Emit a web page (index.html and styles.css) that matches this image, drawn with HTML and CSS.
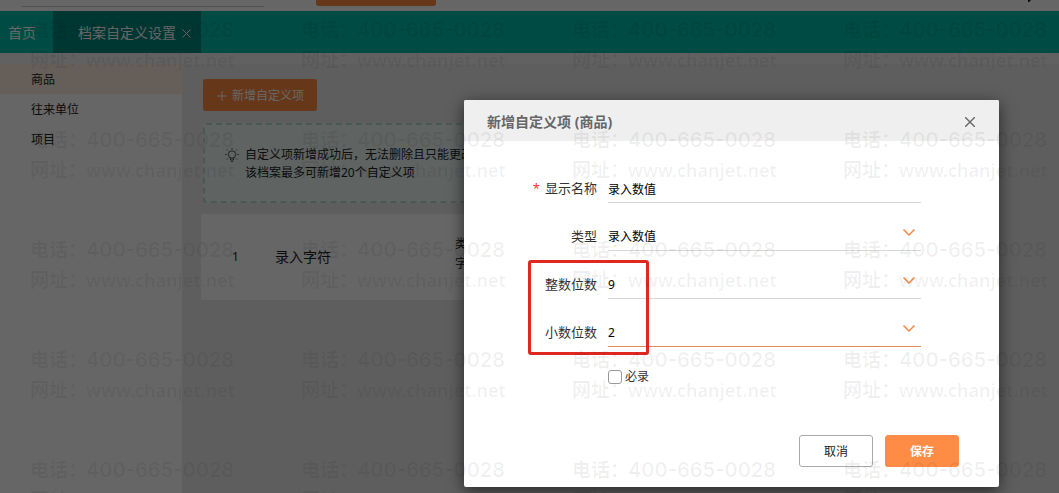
FILE: index.html
```html
<!DOCTYPE html>
<html lang="zh-CN">
<head>
<meta charset="utf-8">
<title>档案自定义设置</title>
<link rel="stylesheet" href="styles.css">
</head>
<body>
<div class="app">
  <header class="topbar">
    <div class="search-line"></div>
    <div class="search-button"></div>
    <svg class="top-mark" width="5" height="3" viewBox="0 0 5 3"><path d="M1 0h3L2 2H1z" fill="#000"/></svg>
  </header>
  <nav class="tabs">
    <a class="tab" href="#">首页</a>
    <a class="tab tab-active" href="#">档案自定义设置
      <svg width="9" height="9" viewBox="0 0 9 9" fill="none" stroke="currentColor"><path d="M.5.5l8 8M8.5.5l-8 8"/></svg>
    </a>
  </nav>
  <div class="workspace">
    <aside class="sidebar">
      <a class="side-item side-active" href="#">商品</a>
      <a class="side-item" href="#">往来单位</a>
      <a class="side-item" href="#">项目</a>
    </aside>
    <main class="main">
      <button class="add-button" type="button">
        <svg width="10" height="10" viewBox="0 0 10 10" stroke="currentColor"><path d="M5 0v10M0 5h10"/></svg>
        新增自定义项
      </button>
      <section class="tip">
        <svg class="bulb" width="14" height="14" viewBox="0 0 14 14" fill="none" stroke="currentColor"><circle cx="7" cy="6.500" r="3.700"/><path d="M5.500 10v2h3v-2M6 13.500h2M7 0v1.500M0 6.500h1.500M12.500 6.500H14M2 1.500l1 1M12 1.500l-1 1M2 11.500l1-1M12 11.500l-1-1"/></svg>
        <p class="tip-text">自定义项新增成功后，无法删除且只能更改<br>该档案最多可新增20个自定义项</p>
      </section>
      <section class="record">
        <span class="record-no">1</span>
        <span class="record-name">录入字符</span>
        <span class="record-type">类型<br>字符</span>
      </section>
    </main>
  </div>
</div>
<div class="backdrop">
  <form class="dialog" role="dialog" aria-labelledby="dialog-title">
    <div class="dialog-head">
      <h2 class="dialog-title" id="dialog-title">新增自定义项 (商品)</h2>
      <button class="close" type="button" aria-label="关闭">
        <svg width="10" height="10" viewBox="0 0 10 10" fill="none" stroke="currentColor" stroke-width="1.400"><path d="M0 0l10 10M10 0L0 10"/></svg>
      </button>
    </div>
    <div class="dialog-body">
      <div class="field">
        <label class="label" for="name"><span class="required">*</span>显示名称</label>
        <div class="control"><input class="value" id="name" type="text" value="录入数值"></div>
      </div>
      <div class="field">
        <label class="label" for="type">类型</label>
        <div class="control">
          <select class="value" id="type"><option>录入数值</option></select>
          <svg class="chevron" width="12" height="7" viewBox="0 0 12 7"><path d="M.5.500L6 6l5.500-5.500"/></svg>
        </div>
      </div>
      <div class="digits">
        <div class="field">
          <label class="label" for="integer">整数位数</label>
          <div class="control">
            <select class="value" id="integer"><option>9</option></select>
            <svg class="chevron" width="12" height="7" viewBox="0 0 12 7"><path d="M.5.500L6 6l5.500-5.500"/></svg>
          </div>
        </div>
        <div class="field">
          <label class="label" for="decimal">小数位数</label>
          <div class="control control-active">
            <select class="value" id="decimal"><option>2</option></select>
            <svg class="chevron" width="12" height="7" viewBox="0 0 12 7"><path d="M.5.500L6 6l5.500-5.500"/></svg>
          </div>
        </div>
        <div class="highlight"></div>
      </div>
      <label class="check"><input class="check-box" type="checkbox">必录</label>
    </div>
    <div class="dialog-foot">
      <button class="button" type="button">取消</button>
      <button class="button button-primary" type="submit">保存</button>
    </div>
  </form>
</div>
<div class="watermarks" aria-hidden="true"></div>
<script src="watermark.js"></script>
</body>
</html>
```

FILE: watermark.js
```js
const layer = document.querySelector('.watermarks');
const count = Math.ceil(innerWidth / 271) * Math.ceil(innerHeight / 110);
for (let i = 0; i < count; i++) {
  const mark = document.createElement('div');
  mark.className = 'watermark';
  mark.innerHTML = '<span>电话：</span><span class="phone">400-665-0028</span><span>网址：</span><span class="site">www.chanjet.net</span>';
  layer.append(mark);
}
```

FILE: styles.css
```css
* { box-sizing: border-box; }

body {
  margin: 0;
  min-height: 100vh;
  overflow: hidden;
  position: relative;
  font: 12px/18px "Noto Sans", "Noto Sans CJK SC", sans-serif;
  color: #222;
}

a { color: inherit; text-decoration: none; }

button, input, select { font: inherit; color: inherit; }

.app {
  display: flex;
  flex-direction: column;
  min-height: 100vh;
  background: #ebebeb;
}

.topbar {
  display: flex;
  height: 11px;
  padding: 0 27px 0 22px;
  background: #fff;
}

.search-line { width: 242px; height: 7px; border-bottom: 1px solid #ccc; }

.search-button {
  width: 120px;
  height: 6px;
  margin-left: 52px;
  border-radius: 0 0 3px 3px;
  background: #ff8c40;
}

.top-mark { margin-left: auto; }

.tabs {
  display: flex;
  height: 42px;
  background: #00bba9;
  color: #fff;
  font-size: 14px;
}

.tab { display: flex; align-items: center; width: 53px; padding: 2px 0 0 8px; }

.tab-active { gap: 6px; width: 148px; padding-left: 25px; background: #008a80; }

.workspace { display: flex; flex: 1; border-top: 11px solid #f2f2f2; }

.sidebar { width: 182px; background: #fff; }

.side-item { display: block; padding: 7px 31px 5px; }

.side-active { background: #ffebdf; }

.main { flex: 1; padding: 15px 80px 0 19px; }

.add-button {
  display: flex;
  align-items: center;
  gap: 5px;
  height: 32px;
  margin-left: 2px;
  padding: 2px 13px 0 14px;
  border: 0;
  border-radius: 3px;
  background: #ff8c40;
  color: #fff;
}

.tip {
  display: flex;
  gap: 6px;
  height: 80px;
  margin: 12px 0 11px 2px;
  padding: 21px 20px 0;
  border: 2px dashed #b5dcd4;
  border-radius: 3px;
  background: #edf8f5;
}

.bulb { margin-top: 2px; color: #555; }

.tip-text { margin: 0; }

.record {
  display: flex;
  align-items: center;
  height: 86px;
  padding-left: 31px;
  background: #fff;
}

.record-no { width: 43px; }

.record-name { width: 180px; font-size: 14px; }

.record-type { line-height: 20px; padding-bottom: 6px; }

.backdrop {
  position: absolute;
  inset: 0;
  display: flex;
  justify-content: flex-end;
  align-items: flex-start;
  padding: 100px 60px 0;
  background: rgba(0, 0, 0, 0.6);
}

.dialog {
  width: 535px;
  border-radius: 2px;
  background: #fff;
  box-shadow: 0 4px 16px rgba(0, 0, 0, 0.6);
}

.dialog-head {
  display: flex;
  align-items: center;
  justify-content: space-between;
  height: 41px;
  padding: 2px 24px 0 23px;
  border-radius: 2px 2px 0 0;
  background: #efefef;
  color: #666;
}

.dialog-title { margin: 0; font-size: 14px; font-weight: 700; }

.close { display: flex; padding: 0; border: 0; background: none; }

.dialog-body { padding: 14px 78px 0 0; }

.field {
  display: grid;
  grid-template-columns: 133px 1fr;
  gap: 11px;
  align-items: end;
  height: 48px;
}

.label {
  height: 28px;
  color: #333;
  font-size: 13px;
  line-height: 27px;
  text-align: right;
}

.required { margin-right: 5px; color: #f33; }

.control { position: relative; height: 28px; border-bottom: 1px solid #d8d8d8; }

.control-active { border-color: #e08a58; }

.value {
  display: block;
  appearance: none;
  width: 100%;
  height: 27px;
  padding: 0;
  border: 0;
  outline: 0;
  background: none;
  color: #000;
}

.chevron {
  position: absolute;
  top: 6px;
  right: 6px;
  fill: none;
  stroke: #f58a45;
  stroke-width: 1.5;
  pointer-events: none;
}

.digits { position: relative; }

.highlight {
  position: absolute;
  inset: 9px auto -8px 64px;
  width: 121px;
  border: 3px solid #e02820;
  border-radius: 3px;
  pointer-events: none;
}

.check {
  display: flex;
  align-items: center;
  gap: 3px;
  margin: 21px 0 0 144px;
  color: #333;
}

.check-box {
  appearance: none;
  width: 14px;
  height: 14px;
  margin: 0;
  border: 1px solid #999;
  border-radius: 3px;
}

.dialog-foot {
  display: flex;
  justify-content: flex-end;
  gap: 12px;
  padding: 49px 40px 20px;
}

.button {
  width: 74px;
  height: 32px;
  padding: 2px 0 0;
  border: 1px solid #aaa;
  border-radius: 3px;
  background: #fff;
  color: #222;
}

.button-primary { border-color: #ff8c45; background: #ff8c45; color: #fff; font-weight: 700; }

.watermarks {
  position: absolute;
  inset: 0;
  display: grid;
  grid-template-columns: repeat(4, 271px);
  align-content: start;
  gap: 50px 0;
  padding: 15px 0 0 30px;
  overflow: hidden;
  color: rgba(0, 0, 0, 0.06);
  font-size: 19px;
  font-weight: 600;
  line-height: 30px;
  pointer-events: none;
}

.watermark { display: grid; grid-template-columns: 56px 1fr; white-space: nowrap; }

.phone { font-family: Inter, "Noto Sans", sans-serif; font-size: 20px; }

.site { font-size: 18px; }
```
